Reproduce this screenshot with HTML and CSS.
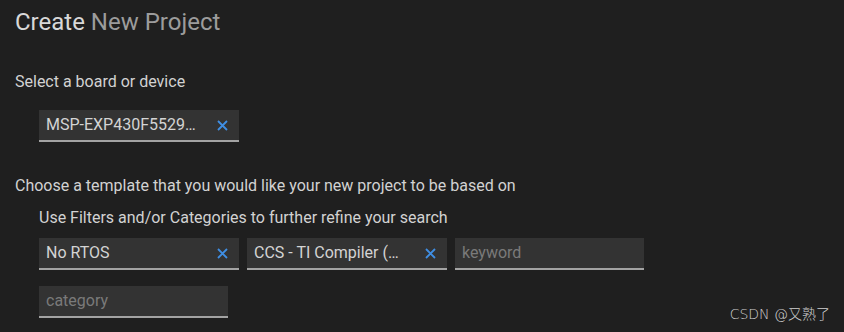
FILE: index.html
```html
<!DOCTYPE html>
<html lang="en">

<head>
    <meta charset="UTF-8">
    <meta name="viewport" content="width=device-width, initial-scale=1.0">
    <title>Create New Project</title>
    <link rel="stylesheet" href="styles.css">
</head>

<body>
    <div class="page">
        <h1 class="title">Create <span class="title-dim">New Project</span></h1>

        <p class="label label-board">Select a board or device</p>
        <div class="indent">
            <div class="field field-wide">
                <span class="field-text">MSP-EXP430F5529…</span>
                <svg class="clear" viewBox="0 0 11 11" width="11" height="11">
                    <path d="M1 1 L10 10 M10 1 L1 10" />
                </svg>
            </div>
        </div>

        <p class="label label-template">Choose a template that you would like your new project to be based on</p>
        <div class="indent">
            <p class="label label-filters">Use Filters and/or Categories to further refine your search</p>
            <div class="filter-row">
                <div class="field field-wide">
                    <span class="field-text">No RTOS</span>
                    <svg class="clear" viewBox="0 0 11 11" width="11" height="11">
                        <path d="M1 1 L10 10 M10 1 L1 10" />
                    </svg>
                </div>
                <div class="field field-wide">
                    <span class="field-text">CCS - TI Compiler (…</span>
                    <svg class="clear" viewBox="0 0 11 11" width="11" height="11">
                        <path d="M1 1 L10 10 M10 1 L1 10" />
                    </svg>
                </div>
                <div class="field field-narrow">
                    <span class="field-text placeholder">keyword</span>
                </div>
            </div>
            <div class="filter-row row-second">
                <div class="field field-narrow">
                    <span class="field-text placeholder">category</span>
                </div>
            </div>
        </div>
    </div>

    <!-- watermark from the screenshot -->
    <div class="watermark">CSDN @又熟了</div>
</body>

</html>
```

FILE: styles.css
```css
body {
    margin: 0;
    height: 100vh;
    background: #1f1f1f;
    font-family: Roboto, "Noto Sans", sans-serif;
    color: #d2d2d2;
    overflow: hidden;
}

.page {
    padding: 6px 15px 0;
}

.title {
    margin: 0;
    font-size: 24px;
    line-height: 32px;
    font-weight: 400;
    color: #d8d8d8;
}

.title-dim {
    color: #9c9c9c;
}

.label {
    margin: 0;
    font-size: 16px;
    line-height: 20px;
}

.label-board {
    margin-top: 34px;
}

.label-template {
    margin-top: 34px;
}

.label-filters {
    margin-top: 12px;
}

.indent {
    padding-left: 24px;
    margin-top: 18px;
}

.label-template + .indent {
    margin-top: 12px;
}

.filter-row {
    display: flex;
    gap: 8px;
    margin-top: 10px;
}

.row-second {
    margin-top: 16px;
}

.field {
    box-sizing: border-box;
    height: 32px;
    display: flex;
    align-items: center;
    justify-content: space-between;
    padding: 0 11px 0 7px;
    background: #333333;
    border-bottom: 2px solid #a3a3a3;
    font-size: 16px;
    line-height: 30px;
}

.field-wide {
    width: 200px;
}

.field-narrow {
    width: 189px;
}

.field-text {
    white-space: nowrap;
    color: #d4d4d4;
}

.placeholder {
    color: #7a7a7a;
}

.clear {
    fill: none;
    stroke: #3f8ee3;
    stroke-width: 1.8;
}

.watermark {
    position: absolute;
    right: 14px;
    bottom: 9px;
    font-family: "DejaVu Sans", "Noto Sans CJK SC", sans-serif;
    font-size: 14px;
    font-weight: 200;
    color: #cfcfcf;
}
```
